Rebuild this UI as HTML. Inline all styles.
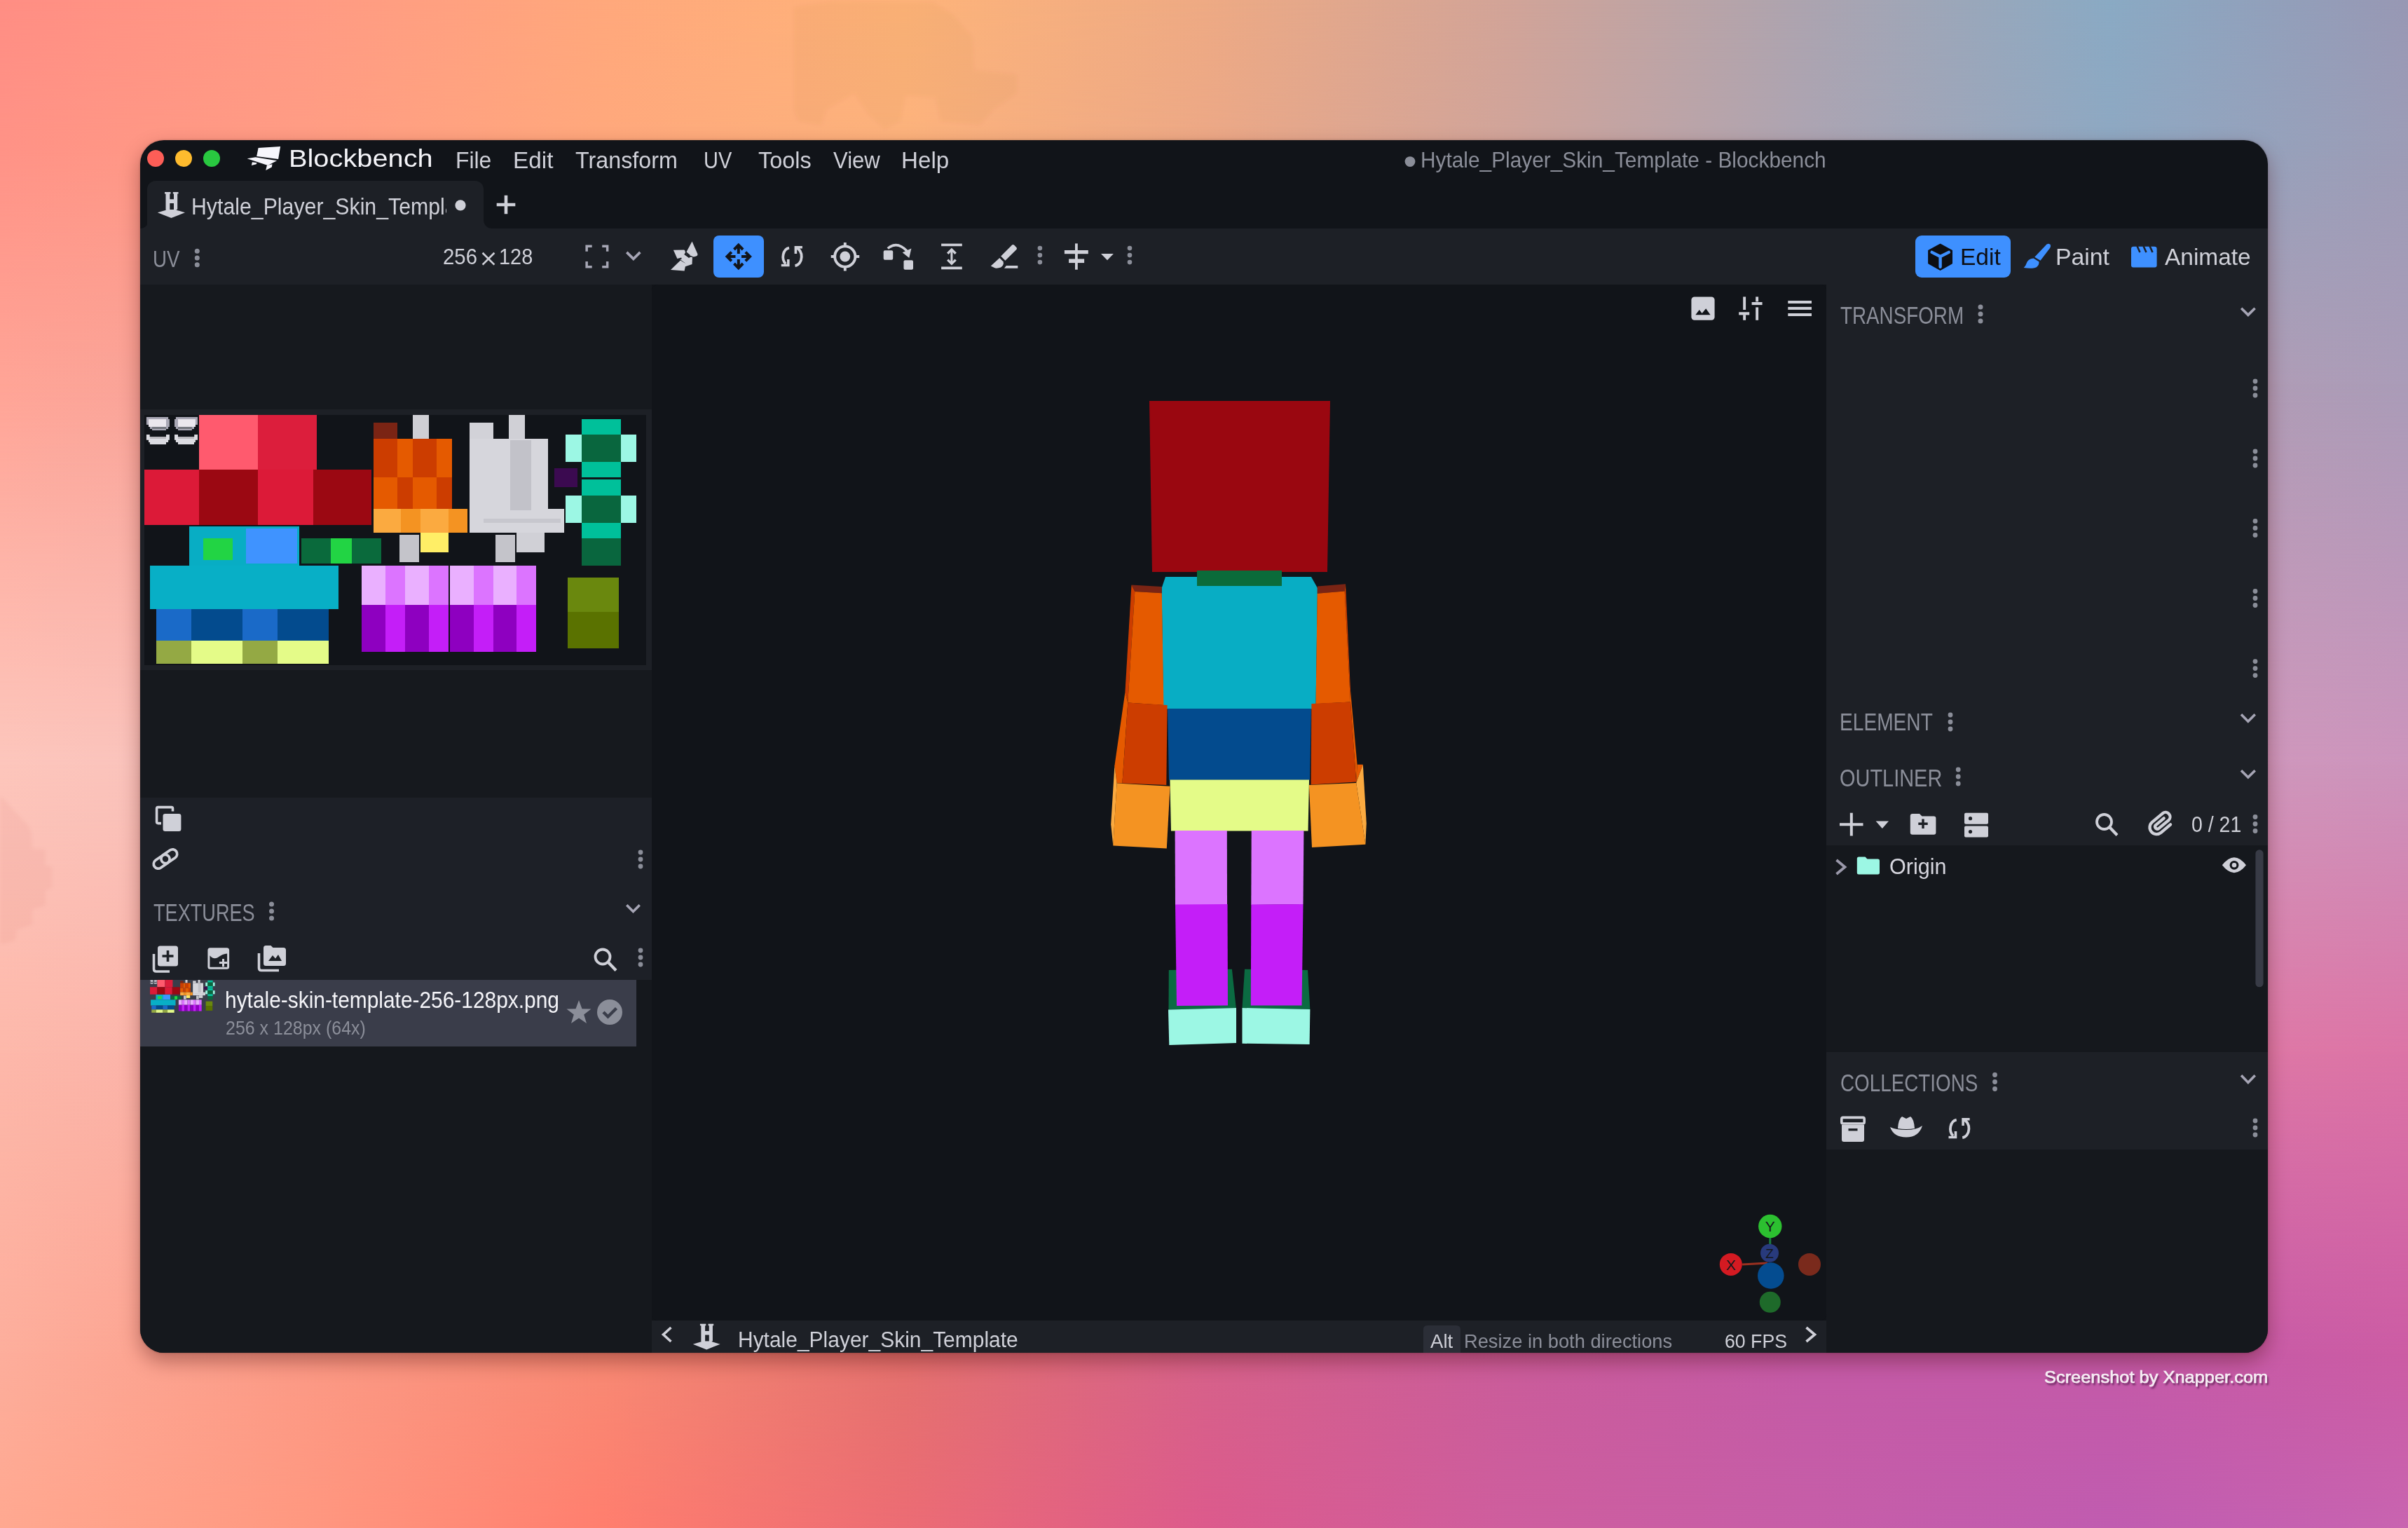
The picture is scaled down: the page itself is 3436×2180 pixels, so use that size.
<!DOCTYPE html>
<html><head><meta charset="utf-8">
<style>
html,body{margin:0;padding:0;width:3436px;height:2180px;overflow:hidden}
body{position:relative;font-family:"Liberation Sans",sans-serif;background:#f0a080}
.t{position:absolute;white-space:nowrap;line-height:1;transform-origin:0 0;font-family:"Liberation Sans",sans-serif}
.a{position:absolute}
#bg0{position:absolute;left:0;top:0;width:3436px;height:2180px;
 background:linear-gradient(90deg,#ff8e84 0px,#ffa07c 700px,#fdb47a 1300px,#f5ae80 1750px,#caa8a2 2350px,#90abc8 2900px,#9c9cb8 3436px)}
#bg1{position:absolute;left:0;top:0;width:3436px;height:2180px;
 background:linear-gradient(90deg,#fdc6bc 0px,#f0a898 600px,#e89890 1700px,#d890b0 2600px,#d088b8 3436px);
 -webkit-mask-image:linear-gradient(180deg,transparent 0px,#000 1100px,transparent 2180px)}
#bg2{position:absolute;left:0;top:0;width:3436px;height:2180px;
 background:linear-gradient(90deg,#ffa590 0px,#ff7d6c 900px,#e8687e 1500px,#d85890 1850px,#c862a8 2500px,#bf5fb2 2850px,#c868b2 3436px);
 -webkit-mask-image:linear-gradient(180deg,transparent 1100px,#000 2180px)}
#win{position:absolute;left:200px;top:200px;width:3036px;height:1730px;border-radius:34px;overflow:hidden;background:#111419;
 box-shadow:0 12px 28px rgba(70,10,10,.38),0 0 3px rgba(0,0,0,.3)}
</style></head><body>
<div class='a' style='left:0;top:0;width:3436px;height:2180px;background:linear-gradient(90deg,#ff8e84 0px,#ff9a84 430px,#ffa87c 860px,#feb47a 1290px,#eeaa84 1720px,#d2a498 2150px,#aca4b0 2580px,#8aaac4 3010px,#9898b4 3436px);'></div>
<div class='a' style='left:0;top:0;width:3436px;height:2180px;background:linear-gradient(90deg,#ff9286 0px,#ff9c84 430px,#ffa87c 860px,#fcb27c 1290px,#eca886 1720px,#d0a49a 2150px,#aca4b2 2580px,#8ea8c2 3010px,#9c9cb6 3436px);-webkit-mask-image:linear-gradient(180deg,transparent 0px,#000 200px);'></div>
<div class='a' style='left:0;top:0;width:3436px;height:2180px;background:linear-gradient(90deg,#ffa496 0px,#f4a39a 430px,#eaa29f 860px,#dfa1a3 1290px,#d4a0a7 1720px,#ca9fab 2150px,#bf9eb0 2580px,#b59db4 3010px,#aa9cb8 3436px);-webkit-mask-image:linear-gradient(180deg,transparent 200px,#000 545px);'></div>
<div class='a' style='left:0;top:0;width:3436px;height:2180px;background:linear-gradient(90deg,#fdc6bc 0px,#f7c0bc 430px,#f1b9bc 860px,#ebb3bc 1290px,#e4adbc 1720px,#dea7bc 2150px,#d8a0bc 2580px,#d29abc 3010px,#cc94bc 3436px);-webkit-mask-image:linear-gradient(180deg,transparent 545px,#000 1090px);'></div>
<div class='a' style='left:0;top:0;width:3436px;height:2180px;background:linear-gradient(90deg,#fdb8aa 0px,#f9afa9 430px,#f5a7a9 860px,#f19ea8 1290px,#ec96a8 1720px,#e88da7 2150px,#e485a7 2580px,#e07ca6 3010px,#dc74a6 3436px);-webkit-mask-image:linear-gradient(180deg,transparent 1090px,#000 1500px);'></div>
<div class='a' style='left:0;top:0;width:3436px;height:2180px;background:linear-gradient(90deg,#fdae9c 0px,#fc9a86 430px,#f88a74 860px,#e4716e 1290px,#d6628a 1720px,#ca5c9a 2150px,#c45aa6 2580px,#c45aa8 3010px,#cc5ca4 3436px);-webkit-mask-image:linear-gradient(180deg,transparent 1500px,#000 1930px);'></div>
<div class='a' style='left:0;top:0;width:3436px;height:2180px;background:linear-gradient(90deg,#ffa890 0px,#ff9880 430px,#ff7e6e 860px,#ec6c74 1290px,#dc5a8c 1720px,#ce5e9e 2150px,#c65ea8 2580px,#c05cb0 3010px,#c864b0 3436px);-webkit-mask-image:linear-gradient(180deg,transparent 1930px,#000 2180px);'></div>
<svg class="a" style="left:0;top:0" width="3436" height="2180">
<defs><filter id="bl"><feGaussianBlur stdDeviation="2.5"/></filter></defs>
<polygon filter="url(#bl)" fill="rgba(150,60,30,0.045)" points="1132.6,10 1189,1.7 1332,3.3 1358.5,20 1388,53 1390,100 1451.5,106 1451.5,133 1418,156 1398,179 1342,173 1335,139.5 1292,136 1285,173 1262,184 1239,163 1219,133 1179,156 1172,179 1139,173 1132.6,156"/>
<polygon filter="url(#bl)" fill="rgba(150,40,40,0.04)" points="0,1136 6.8,1141 17,1153 40.9,1178 45,1188.5 46,1210.6 64.7,1212 64.7,1234.5 74,1236 74,1267.7 64.7,1270 64.7,1292 46,1297.4 46,1319.6 23.8,1326.4 22,1341.7 6.8,1346 0,1346"/>
</svg>
<div id="win">
 <!-- coordinates inside window: page - 200 -->
 <!-- tab -->
 <div class="a" style="left:10px;top:58px;width:480px;height:68px;background:#1d2026;border-radius:12px 12px 0 0"></div>
 <div class="a" style="left:490px;top:114px;width:12px;height:12px;background:radial-gradient(circle at 100% 0,#111419 11.5px,#1d2026 12.5px)"></div>
 <div class="a" style="left:0px;top:114px;width:10px;height:12px;background:radial-gradient(circle at 0 0,#111419 11.5px,#1d2026 12.5px)"></div>
 <!-- toolbar -->
 <div class="a" style="left:0;top:126px;width:3036px;height:80px;background:#1d2026"></div>
 <!-- left panel -->
 <div class="a" style="left:0;top:206px;width:730px;height:178px;background:#16191e"></div>
 <div class="a" style="left:0;top:384px;width:730px;height:372px;background:#1d2026"></div>
 <div class="a" style="left:6px;top:392px;width:716px;height:357px;background:#111419"></div>
 <div class="a" style="left:0;top:756px;width:730px;height:182px;background:#16191e"></div>
 <div class="a" style="left:0;top:938px;width:730px;height:260px;background:#1d2027"></div>
 <div class="a" style="left:0;top:1198px;width:730px;height:532px;background:#15181d"></div>
 <div class="a" style="left:0;top:1198px;width:708px;height:95px;background:#3a3d4a"></div>
 <!-- viewport -->
 <div class="a" style="left:730px;top:206px;width:1676px;height:1478px;background:#111419;border-radius:9px"></div>
 <!-- status bar -->
 <div class="a" style="left:730px;top:1684px;width:1676px;height:46px;background:#1d2026"></div>
 <!-- right panel -->
 <div class="a" style="left:2406px;top:206px;width:630px;height:1000px;background:#1d2026"></div>
 <div class="a" style="left:2406px;top:1006px;width:630px;height:295px;background:#15181d"></div>
 <div class="a" style="left:2406px;top:1301px;width:630px;height:139px;background:#1d2026"></div>
 <div class="a" style="left:2406px;top:1440px;width:630px;height:290px;background:#15181d"></div>
 <!--WIN-->
</div>
<svg class='a' style='left:0;top:0' width='3436' height='2180' viewBox='0 0 3436 2180'><rect x='284' y='592' width='84.0' height='78.0' fill='#ff5a6e' />
<rect x='368' y='592' width='84.0' height='78.0' fill='#dc1e3c' />
<rect x='206' y='670' width='78.0' height='79.0' fill='#dc1a38' />
<rect x='284' y='670' width='84.0' height='79.0' fill='#9b0812' />
<rect x='368' y='670' width='79.0' height='79.0' fill='#dc1a38' />
<rect x='447' y='670' width='83.0' height='79.0' fill='#9b0812' />
<polygon points='208.9,595.0 240.1,595.0 240.1,598.1 241.9,598.1 241.9,608.9 240.1,608.9 240.1,612.0 237.0,612.0 237.0,613.9 217.0,613.9 217.0,612.0 213.9,612.0 213.9,608.9 212.0,608.9 212.0,606.0 208.9,606.0' fill='#a9a7b5'/>
<polygon points='212.0,598.1 237.0,598.1 237.0,608.9 212.0,608.9' fill='#ebe7ee'/>
<polygon points='217.0,609.1 237.0,609.1 237.0,612.0 217.0,612.0' fill='#74767e'/>
<polygon points='208.9,620.1 213.7,620.1 213.7,623.0 237.0,623.0 237.0,620.1 241.9,620.1 241.9,627.8 240.1,627.8 240.1,631.1 237.0,631.1 237.0,634.0 213.9,634.0 213.9,631.1 212.0,631.1 212.0,627.8 208.9,627.8' fill='#dcdce2'/>
<polygon points='213.9,623.0 237.0,623.0 237.0,625.9 213.9,625.9' fill='#b8b6bc'/>
<polygon points='282.0,595.0 250.9,595.0 250.9,598.1 249.0,598.1 249.0,608.9 250.9,608.9 250.9,612.0 254.0,612.0 254.0,613.9 273.9,613.9 273.9,612.0 277.0,612.0 277.0,608.9 278.9,608.9 278.9,606.0 282.0,606.0' fill='#a9a7b5'/>
<polygon points='278.9,598.1 254.0,598.1 254.0,608.9 278.9,608.9' fill='#ebe7ee'/>
<polygon points='273.9,609.1 254.0,609.1 254.0,612.0 273.9,612.0' fill='#74767e'/>
<polygon points='282.0,620.1 277.2,620.1 277.2,623.0 254.0,623.0 254.0,620.1 249.0,620.1 249.0,627.8 250.9,627.8 250.9,631.1 254.0,631.1 254.0,634.0 277.0,634.0 277.0,631.1 278.9,631.1 278.9,627.8 282.0,627.8' fill='#dcdce2'/>
<polygon points='277.0,623.0 254.0,623.0 254.0,625.9 277.0,625.9' fill='#b8b6bc'/>
<rect x='270' y='751' width='157.0' height='56.0' fill='#08adc4' />
<rect x='290' y='768' width='42.0' height='31.0' fill='#22d444' />
<rect x='351' y='754' width='73.0' height='50.0' fill='#3f93ff' />
<rect x='430' y='768' width='114.0' height='36.0' fill='#0a6a3c' />
<rect x='472' y='768' width='30.0' height='36.0' fill='#22d444' />
<rect x='214' y='807' width='269.0' height='62.0' fill='#08afc6' />
<rect x='223' y='869' width='50.0' height='45.0' fill='#1a6ac8' />
<rect x='273' y='869' width='73.0' height='45.0' fill='#034b8e' />
<rect x='346' y='869' width='50.0' height='45.0' fill='#1a6ac8' />
<rect x='396' y='869' width='73.0' height='45.0' fill='#034b8e' />
<rect x='223' y='914' width='50.0' height='33.0' fill='#94a944' />
<rect x='273' y='914' width='73.0' height='33.0' fill='#e4fb88' />
<rect x='346' y='914' width='50.0' height='33.0' fill='#94a944' />
<rect x='396' y='914' width='73.0' height='33.0' fill='#e4fb88' />
<rect x='533' y='603' width='34.0' height='23.0' fill='#7a2414' />
<rect x='589' y='592' width='23.0' height='34.0' fill='#cfcfd4' />
<rect x='533' y='626' width='34.0' height='55.0' fill='#cc3d00' />
<rect x='533' y='681' width='34.0' height='45.0' fill='#e55a00' />
<rect x='567' y='626' width='22.0' height='55.0' fill='#e55a00' />
<rect x='567' y='681' width='22.0' height='45.0' fill='#cc3d00' />
<rect x='589' y='626' width='34.0' height='55.0' fill='#cc3d00' />
<rect x='589' y='681' width='34.0' height='45.0' fill='#e55a00' />
<rect x='623' y='626' width='22.0' height='55.0' fill='#e55a00' />
<rect x='623' y='681' width='22.0' height='45.0' fill='#cc3d00' />
<rect x='533' y='726' width='39.0' height='34.0' fill='#fbaa40' />
<rect x='572' y='726' width='28.0' height='34.0' fill='#f49322' />
<rect x='600' y='726' width='40.0' height='34.0' fill='#fbaa40' />
<rect x='640' y='726' width='27.0' height='34.0' fill='#f49322' />
<rect x='570' y='763' width='28.0' height='39.0' fill='#c4c4ca' />
<rect x='600' y='760' width='40.0' height='28.0' fill='#ffee66' />
<rect x='670' y='603' width='34.0' height='23.0' fill='#d2d2d8' />
<rect x='726' y='592' width='23.0' height='34.0' fill='#d0d0d6' />
<rect x='670' y='626' width='112.0' height='134.0' fill='#d6d6dc' />
<rect x='782' y='726' width='23.0' height='34.0' fill='#d6d6dc' />
<rect x='737' y='760' width='40.0' height='28.0' fill='#d0d0d6' />
<rect x='707' y='763' width='28.0' height='39.0' fill='#c4c4ca' />
<rect x='728' y='628' width='30' height='100' fill='#b4b4bc' opacity='.6'/>
<rect x='690' y='740' width='110' height='6' fill='#b8b8c0' opacity='.5'/>
<rect x='791' y='668' width='33.0' height='27.0' fill='#3b0a50' />
<rect x='830' y='598' width='56.0' height='22.0' fill='#00c09a' />
<rect x='807' y='620' width='23.0' height='39.0' fill='#9cf7e4' />
<rect x='886' y='620' width='22.0' height='39.0' fill='#9cf7e4' />
<rect x='830' y='620' width='56.0' height='39.0' fill='#09663e' />
<rect x='830' y='659' width='56.0' height='22.0' fill='#00c09a' />
<rect x='830' y='684' width='56.0' height='23.0' fill='#00c09a' />
<rect x='807' y='707' width='23.0' height='39.0' fill='#9cf7e4' />
<rect x='886' y='707' width='22.0' height='39.0' fill='#9cf7e4' />
<rect x='830' y='707' width='56.0' height='39.0' fill='#09663e' />
<rect x='830' y='746' width='56.0' height='22.0' fill='#00c09a' />
<rect x='830' y='768' width='56.0' height='39.0' fill='#09663e' />
<rect x='810' y='824' width='73.0' height='49.0' fill='#6a880e' />
<rect x='810' y='873' width='73.0' height='52.0' fill='#5a7200' />
<rect x='516' y='807' width='34.0' height='56.0' fill='#eab0ff' />
<rect x='516' y='863' width='34.0' height='67.0' fill='#8e00c0' />
<rect x='550' y='807' width='28.0' height='56.0' fill='#dc74ff' />
<rect x='550' y='863' width='28.0' height='67.0' fill='#c41ef8' />
<rect x='578' y='807' width='34.0' height='56.0' fill='#eab0ff' />
<rect x='578' y='863' width='34.0' height='67.0' fill='#8e00c0' />
<rect x='612' y='807' width='28.0' height='56.0' fill='#dc74ff' />
<rect x='612' y='863' width='28.0' height='67.0' fill='#c41ef8' />
<rect x='642' y='807' width='34.0' height='56.0' fill='#eab0ff' />
<rect x='642' y='863' width='34.0' height='67.0' fill='#8e00c0' />
<rect x='676' y='807' width='28.0' height='56.0' fill='#dc74ff' />
<rect x='676' y='863' width='28.0' height='67.0' fill='#c41ef8' />
<rect x='704' y='807' width='33.0' height='56.0' fill='#eab0ff' />
<rect x='704' y='863' width='33.0' height='67.0' fill='#8e00c0' />
<rect x='737' y='807' width='28.0' height='56.0' fill='#dc74ff' />
<rect x='737' y='863' width='28.0' height='67.0' fill='#c41ef8' /><g transform='translate(214,1398) scale(0.1318435754189944) translate(-206,-592)'><rect x='284' y='592' width='84.0' height='78.0' fill='#ff5a6e' />
<rect x='368' y='592' width='84.0' height='78.0' fill='#dc1e3c' />
<rect x='206' y='670' width='78.0' height='79.0' fill='#dc1a38' />
<rect x='284' y='670' width='84.0' height='79.0' fill='#9b0812' />
<rect x='368' y='670' width='79.0' height='79.0' fill='#dc1a38' />
<rect x='447' y='670' width='83.0' height='79.0' fill='#9b0812' />
<polygon points='208.9,595.0 240.1,595.0 240.1,598.1 241.9,598.1 241.9,608.9 240.1,608.9 240.1,612.0 237.0,612.0 237.0,613.9 217.0,613.9 217.0,612.0 213.9,612.0 213.9,608.9 212.0,608.9 212.0,606.0 208.9,606.0' fill='#a9a7b5'/>
<polygon points='212.0,598.1 237.0,598.1 237.0,608.9 212.0,608.9' fill='#ebe7ee'/>
<polygon points='217.0,609.1 237.0,609.1 237.0,612.0 217.0,612.0' fill='#74767e'/>
<polygon points='208.9,620.1 213.7,620.1 213.7,623.0 237.0,623.0 237.0,620.1 241.9,620.1 241.9,627.8 240.1,627.8 240.1,631.1 237.0,631.1 237.0,634.0 213.9,634.0 213.9,631.1 212.0,631.1 212.0,627.8 208.9,627.8' fill='#dcdce2'/>
<polygon points='213.9,623.0 237.0,623.0 237.0,625.9 213.9,625.9' fill='#b8b6bc'/>
<polygon points='282.0,595.0 250.9,595.0 250.9,598.1 249.0,598.1 249.0,608.9 250.9,608.9 250.9,612.0 254.0,612.0 254.0,613.9 273.9,613.9 273.9,612.0 277.0,612.0 277.0,608.9 278.9,608.9 278.9,606.0 282.0,606.0' fill='#a9a7b5'/>
<polygon points='278.9,598.1 254.0,598.1 254.0,608.9 278.9,608.9' fill='#ebe7ee'/>
<polygon points='273.9,609.1 254.0,609.1 254.0,612.0 273.9,612.0' fill='#74767e'/>
<polygon points='282.0,620.1 277.2,620.1 277.2,623.0 254.0,623.0 254.0,620.1 249.0,620.1 249.0,627.8 250.9,627.8 250.9,631.1 254.0,631.1 254.0,634.0 277.0,634.0 277.0,631.1 278.9,631.1 278.9,627.8 282.0,627.8' fill='#dcdce2'/>
<polygon points='277.0,623.0 254.0,623.0 254.0,625.9 277.0,625.9' fill='#b8b6bc'/>
<rect x='270' y='751' width='157.0' height='56.0' fill='#08adc4' />
<rect x='290' y='768' width='42.0' height='31.0' fill='#22d444' />
<rect x='351' y='754' width='73.0' height='50.0' fill='#3f93ff' />
<rect x='430' y='768' width='114.0' height='36.0' fill='#0a6a3c' />
<rect x='472' y='768' width='30.0' height='36.0' fill='#22d444' />
<rect x='214' y='807' width='269.0' height='62.0' fill='#08afc6' />
<rect x='223' y='869' width='50.0' height='45.0' fill='#1a6ac8' />
<rect x='273' y='869' width='73.0' height='45.0' fill='#034b8e' />
<rect x='346' y='869' width='50.0' height='45.0' fill='#1a6ac8' />
<rect x='396' y='869' width='73.0' height='45.0' fill='#034b8e' />
<rect x='223' y='914' width='50.0' height='33.0' fill='#94a944' />
<rect x='273' y='914' width='73.0' height='33.0' fill='#e4fb88' />
<rect x='346' y='914' width='50.0' height='33.0' fill='#94a944' />
<rect x='396' y='914' width='73.0' height='33.0' fill='#e4fb88' />
<rect x='533' y='603' width='34.0' height='23.0' fill='#7a2414' />
<rect x='589' y='592' width='23.0' height='34.0' fill='#cfcfd4' />
<rect x='533' y='626' width='34.0' height='55.0' fill='#cc3d00' />
<rect x='533' y='681' width='34.0' height='45.0' fill='#e55a00' />
<rect x='567' y='626' width='22.0' height='55.0' fill='#e55a00' />
<rect x='567' y='681' width='22.0' height='45.0' fill='#cc3d00' />
<rect x='589' y='626' width='34.0' height='55.0' fill='#cc3d00' />
<rect x='589' y='681' width='34.0' height='45.0' fill='#e55a00' />
<rect x='623' y='626' width='22.0' height='55.0' fill='#e55a00' />
<rect x='623' y='681' width='22.0' height='45.0' fill='#cc3d00' />
<rect x='533' y='726' width='39.0' height='34.0' fill='#fbaa40' />
<rect x='572' y='726' width='28.0' height='34.0' fill='#f49322' />
<rect x='600' y='726' width='40.0' height='34.0' fill='#fbaa40' />
<rect x='640' y='726' width='27.0' height='34.0' fill='#f49322' />
<rect x='570' y='763' width='28.0' height='39.0' fill='#c4c4ca' />
<rect x='600' y='760' width='40.0' height='28.0' fill='#ffee66' />
<rect x='670' y='603' width='34.0' height='23.0' fill='#d2d2d8' />
<rect x='726' y='592' width='23.0' height='34.0' fill='#d0d0d6' />
<rect x='670' y='626' width='112.0' height='134.0' fill='#d6d6dc' />
<rect x='782' y='726' width='23.0' height='34.0' fill='#d6d6dc' />
<rect x='737' y='760' width='40.0' height='28.0' fill='#d0d0d6' />
<rect x='707' y='763' width='28.0' height='39.0' fill='#c4c4ca' />
<rect x='728' y='628' width='30' height='100' fill='#b4b4bc' opacity='.6'/>
<rect x='690' y='740' width='110' height='6' fill='#b8b8c0' opacity='.5'/>
<rect x='791' y='668' width='33.0' height='27.0' fill='#3b0a50' />
<rect x='830' y='598' width='56.0' height='22.0' fill='#00c09a' />
<rect x='807' y='620' width='23.0' height='39.0' fill='#9cf7e4' />
<rect x='886' y='620' width='22.0' height='39.0' fill='#9cf7e4' />
<rect x='830' y='620' width='56.0' height='39.0' fill='#09663e' />
<rect x='830' y='659' width='56.0' height='22.0' fill='#00c09a' />
<rect x='830' y='684' width='56.0' height='23.0' fill='#00c09a' />
<rect x='807' y='707' width='23.0' height='39.0' fill='#9cf7e4' />
<rect x='886' y='707' width='22.0' height='39.0' fill='#9cf7e4' />
<rect x='830' y='707' width='56.0' height='39.0' fill='#09663e' />
<rect x='830' y='746' width='56.0' height='22.0' fill='#00c09a' />
<rect x='830' y='768' width='56.0' height='39.0' fill='#09663e' />
<rect x='810' y='824' width='73.0' height='49.0' fill='#6a880e' />
<rect x='810' y='873' width='73.0' height='52.0' fill='#5a7200' />
<rect x='516' y='807' width='34.0' height='56.0' fill='#eab0ff' />
<rect x='516' y='863' width='34.0' height='67.0' fill='#8e00c0' />
<rect x='550' y='807' width='28.0' height='56.0' fill='#dc74ff' />
<rect x='550' y='863' width='28.0' height='67.0' fill='#c41ef8' />
<rect x='578' y='807' width='34.0' height='56.0' fill='#eab0ff' />
<rect x='578' y='863' width='34.0' height='67.0' fill='#8e00c0' />
<rect x='612' y='807' width='28.0' height='56.0' fill='#dc74ff' />
<rect x='612' y='863' width='28.0' height='67.0' fill='#c41ef8' />
<rect x='642' y='807' width='34.0' height='56.0' fill='#eab0ff' />
<rect x='642' y='863' width='34.0' height='67.0' fill='#8e00c0' />
<rect x='676' y='807' width='28.0' height='56.0' fill='#dc74ff' />
<rect x='676' y='863' width='28.0' height='67.0' fill='#c41ef8' />
<rect x='704' y='807' width='33.0' height='56.0' fill='#eab0ff' />
<rect x='704' y='863' width='33.0' height='67.0' fill='#8e00c0' />
<rect x='737' y='807' width='28.0' height='56.0' fill='#dc74ff' />
<rect x='737' y='863' width='28.0' height='67.0' fill='#c41ef8' /></g><polygon points='1640.0,572.0 1898.0,572.0 1894.0,816.0 1644.0,816.0' fill='#9a0710' />
<rect x='1708' y='814' width='121.0' height='22.0' fill='#0b6b3a' />
<polygon points='1663.0,823.0 1708.0,823.0 1708.0,836.0 1829.0,836.0 1829.0,823.0 1871.0,823.0 1880.0,839.0 1877.5,1011.6 1660.0,1011.6 1657.6,839.0' fill='#08adc4' />
<polygon points='1666.0,1011.0 1871.0,1011.0 1869.0,1112.7 1668.0,1112.7' fill='#034b8e' />
<polygon points='1669.4,1112.5 1868.0,1112.5 1866.5,1185.6 1671.0,1185.6' fill='#e4fb88' />
<polygon points='1614.5,834.4 1657.8,837.0 1657.8,846.2 1619.3,844.1' fill='#7a2414' />
<polygon points='1614.5,834.4 1619.3,844.1 1609.3,1002.6 1605.4,987.7' fill='#cc3d00' />
<polygon points='1619.3,844.1 1657.8,846.2 1660.4,1006.0 1609.3,1002.6' fill='#e55a00' />
<polygon points='1605.4,987.7 1609.3,1002.6 1601.4,1117.4 1590.4,1092.5' fill='#e55a00' />
<polygon points='1609.3,1002.6 1665.6,1006.0 1664.3,1120.0 1601.4,1117.4' fill='#cc3d00' />
<polygon points='1590.4,1092.5 1598.3,1092.5 1601.4,1117.4 1593.6,1117.4' fill='#e55a00' />
<polygon points='1590.4,1092.5 1593.6,1117.4 1588.3,1206.4 1585.2,1176.3' fill='#fbaa40' />
<polygon points='1593.6,1117.4 1669.6,1121.8 1664.8,1210.4 1588.3,1206.4' fill='#f49322' />
<polygon points='1879.7,836.5 1920.0,833.2 1918.7,843.4 1879.7,846.7' fill='#7a2414' />
<polygon points='1920.0,833.2 1927.0,985.0 1927.0,1001.4 1918.7,843.4' fill='#cc3d00' />
<polygon points='1879.7,846.7 1918.7,843.4 1927.0,1001.4 1877.5,1004.2' fill='#e55a00' />
<polygon points='1927.0,985.0 1936.6,1090.8 1935.2,1115.5 1927.0,1001.4' fill='#e55a00' />
<polygon points='1871.4,1004.0 1927.0,1001.4 1935.2,1115.5 1870.6,1119.6' fill='#cc3d00' />
<polygon points='1936.6,1090.8 1944.8,1090.8 1935.2,1116.9' fill='#e55a00' />
<polygon points='1944.8,1090.8 1949.8,1174.6 1948.4,1204.8 1935.2,1116.9' fill='#fbaa40' />
<polygon points='1867.9,1120.0 1935.2,1116.9 1948.4,1204.8 1872.0,1209.0' fill='#f49322' />
<polygon points='1667.8,1384.0 1757.9,1382.7 1763.8,1438.0 1667.5,1440.5' fill='#0b6b42' />
<polygon points='1776.0,1382.7 1866.0,1384.0 1869.4,1440.0 1772.5,1438.0' fill='#0b6b42' />
<polygon points='1676.6,1185.0 1750.8,1185.0 1751.0,1291.0 1677.0,1291.0' fill='#dc74ff' />
<polygon points='1677.0,1290.5 1751.5,1290.0 1752.0,1434.6 1679.0,1435.0' fill='#c41ef8' />
<polygon points='1785.7,1185.0 1860.4,1185.0 1859.5,1290.0 1785.3,1291.0' fill='#dc74ff' />
<polygon points='1785.3,1290.5 1859.5,1290.0 1857.5,1434.6 1784.8,1434.6' fill='#c41ef8' />
<polygon points='1667.0,1440.5 1764.0,1438.0 1764.0,1488.0 1668.3,1491.0' fill='#9cf7e4' />
<polygon points='1772.5,1438.0 1869.4,1440.0 1868.6,1490.0 1772.5,1488.8' fill='#9cf7e4' /><line x1='2486' y1='1804' x2='2522' y2='1802' stroke='#9a3020' stroke-width='3'/>
<line x1='2525.8' y1='1764' x2='2525.8' y2='1777' stroke='#1a7a40' stroke-width='3'/>
<circle cx='2525.8' cy='1749.5' r='16.7' fill='#2cc030'/>
<circle cx='2525' cy='1787.7' r='13' fill='#283a7c'/>
<circle cx='2469.8' cy='1803.9' r='16' fill='#d41a22'/>
<circle cx='2526.8' cy='1820' r='18.8' fill='#044c90'/>
<circle cx='2582' cy='1803.9' r='16' fill='#7a2a1c'/>
<circle cx='2525.8' cy='1857.8' r='15' fill='#1e6a2a'/>
<text x='2525.8' y='1757' font-size='21' font-family='Liberation Sans' text-anchor='middle' fill='#14181c'>Y</text>
<text x='2525' y='1795' font-size='19' font-family='Liberation Sans' text-anchor='middle' fill='#14181c'>Z</text>
<text x='2469.8' y='1811.5' font-size='21' font-family='Liberation Sans' text-anchor='middle' fill='#14181c'>X</text><circle cx='222' cy='226' r='12' fill='#fd5e57'/><circle cx='262' cy='226' r='12' fill='#febb2e'/><circle cx='302' cy='226' r='12' fill='#29c840'/>
<g fill='#f6f6fc'><polygon points='368.6,211 400.1,209 397.1,227.1 366.2,222.9'/><polygon points='352.6,226.2 364.6,224.3 395.1,229.2 382.2,235.9'/><polygon points='359.9,231.2 366.6,232.2 365.6,234.2 358.9,235.9'/><polygon points='380.9,235.9 388.5,234.2 387.8,238.5 379.2,242.9'/></g>
<circle cx='2012' cy='230.6' r='7.4' fill='#8b8e99'/>
<g transform='translate(225,274) scale(1.0) translate(-225,-274)' fill='#cfd0d8'>
<path d='M224.8,303.3 L244.4,297.5 L264,303.3 L244.4,311.1 Z'/>
<path d='M235,274 H243.5 V276.5 H242.3 V284.3 H248 V276.5 H246.8 V274 H254.5 V276.5 H253.2 V298.5 L244.4,304.5 L236.5,299.5 V276.5 H235 Z'/>
<rect x='242.3' y='290' width='5.7' height='9' fill='#1d2026'/>
</g>
<circle cx='657' cy='292.8' r='7.6' fill='#cfd0d8'/>
<path d='M708.7 292 H735.3 M722 278.7 V305.2' stroke='#cfd0d8' stroke-width='4.6'/>
<circle cx='281.3' cy='358.2' r='3.5' fill='#8b8e99'/><circle cx='281.3' cy='368.0' r='3.5' fill='#8b8e99'/><circle cx='281.3' cy='377.8' r='3.5' fill='#8b8e99'/>
<path d='M688.6,360.8 L705.4,377.6 M705.4,360.8 L688.6,377.6' stroke='#cfd0d8' stroke-width='2.7'/>
<path d='M837.15,358.7 V351.15 H844.7 M859.2,351.15 H866.65 V358.7 M866.65,373 V380.75 H859.2 M844.7,380.75 H837.15 V373' fill='none' stroke='#a6a6b4' stroke-width='3.5'/>
<polyline points='894.27,359.87 903.85,369.35 913.43,359.87' fill='none' stroke='#a6a5b5' stroke-width='3.6' stroke-linecap='butt' stroke-linejoin='miter'/>
<g fill='#cfd0d8'>
<path d='M987.5,344.6 L995.5,362.5 Q995.6,364.8 993.5,365.6 L989.7,366.6 L979.8,362.5 Q978.5,361.6 979.2,360 Z'/>
<path d='M960.9,356.8 L976.2,356.4 Q977.9,357 977.9,360.3 L973.5,368.1 L966.6,369.4 Z'/>
<path d='M957,385.1 L970.9,371.6 L977.5,375.5 L984.4,366.8 L988,366.8 L987.5,376.9 L977.9,380.3 L976.6,386.5 Z'/>
<path d='M969,369 L975.5,362.5 L985,369.5 L978.5,376 Z'/>
</g>
<path d='M965,370.5 L972.5,368.5 M978.5,360 L984,364.5' stroke='#1d2026' stroke-width='2.2'/>
<rect x='1018' y='336' width='72' height='60' rx='8' fill='#3e90ff'/>
<g stroke='#12151a' stroke-width='4' fill='none' stroke-linecap='butt'>
<path d='M1053.8 351 V362 M1053.8 370 V381 M1038 366 H1049.5 M1058 366 H1069.5'/>
<polyline points='1047.5,356 1053.8,349.7 1060.1,356'/>
<polyline points='1047.5,376 1053.8,382.3 1060.1,376'/>
<polyline points='1043.8,359.7 1037.5,366 1043.8,372.3'/>
<polyline points='1063.8,359.7 1070.1,366 1063.8,372.3'/>
</g>
<g transform='translate(0,0)'><g fill='none' stroke='#cfd0d8' stroke-width='3.8'>
<path d='M1126,353.6 A10.5,13 0 0 0 1121.2,376.5'/>
<path d='M1135.5,353.2 A10.5,13.2 0 0 1 1134.5,379.2'/>
</g>
<g fill='#cfd0d8'><path d='M1114.8,380.3 L1126.6,380.3 L1126.6,369.9 L1123,369.9 L1123,376.7 L1114.8,376.7 Z'/>
<path d='M1144.9,351 L1133.6,351 L1133.6,362 L1137.2,362 L1137.2,354.6 L1144.9,354.6 Z'/></g></g>
<g stroke='#cfd0d8' stroke-width='3.9' fill='none'><circle cx='1205.8' cy='366' r='14.6'/>
<path d='M1205.8,345.9 V351.4 M1205.8,380.6 V386.5 M1185.7,366 H1191.2 M1220.4,366 H1226.2'/></g>
<circle cx='1205.8' cy='366' r='7.4' fill='#cfd0d8'/>
<g fill='#cfd0d8'><rect x='1260.7' y='357.2' width='13.5' height='13.6' rx='2'/><rect x='1289.5' y='371.2' width='13.5' height='13.5' rx='2'/>
<path d='M1297.3,368.1 L1287.7,360.3 L1300.4,354.6 Z'/></g>
<path d='M1266.8,354.5 Q1280,343 1294.5,358.5' fill='none' stroke='#cfd0d8' stroke-width='3.6'/>
<g fill='#cfd0d8'><rect x='1343.1' y='347.6' width='29.7' height='3.6'/><rect x='1343.1' y='380.5' width='29.7' height='3.8'/>
<rect x='1356.4' y='356' width='3' height='20'/>
<path d='M1351,360.5 L1357.9,353.7 L1364.9,360.5 L1362.5,362.9 L1357.9,358.3 L1353.4,362.9 Z'/>
<path d='M1351,371.8 L1357.9,378.6 L1364.9,371.8 L1362.5,369.4 L1357.9,374 L1353.4,369.4 Z'/></g>
<g fill='#cfd0d8'><path d='M1444.4,349.3 Q1446,348.5 1447.5,350 L1450.6,353.3 Q1451.5,355 1450.4,356 L1434.4,371.8 L1428.2,365.6 Z'/>
<path d='M1426.3,368 L1431.5,373.2 Q1433,378 1428,381.5 Q1424,383 1420,382.5 L1413.8,379.4 Z'/>
<path d='M1433,382.8 L1435.8,378.9 H1452.3 V382.8 Z'/></g>
<circle cx='1483.9' cy='354.1' r='3.3' fill='#8b8e99'/><circle cx='1483.9' cy='364.1' r='3.3' fill='#8b8e99'/><circle cx='1483.9' cy='374.1' r='3.3' fill='#8b8e99'/>
<g fill='#cfd0d8'><rect x='1534' y='347.4' width='3.8' height='37.3'/><rect x='1518.9' y='357' width='33.9' height='5.2'/><rect x='1525.1' y='369.4' width='22' height='5.7'/></g>
<polygon points='1571,362 1588.9,362 1580,371.3' fill='#cfd0d8'/>
<circle cx='1612' cy='354.1' r='3.3' fill='#8b8e99'/><circle cx='1612' cy='364.1' r='3.3' fill='#8b8e99'/><circle cx='1612' cy='374.1' r='3.3' fill='#8b8e99'/>
<rect x='2733' y='336' width='136' height='60' rx='9' fill='#3e90ff'/>
<path d='M2768.6,348.7 L2785,357.7 V375.6 L2768.6,385 L2752.1,375.6 V357.7 Z' fill='#0d0f14' stroke='#0d0f14' stroke-width='2' stroke-linejoin='round'/>
<path d='M2756.6,359.9 L2768.6,366 L2780.8,359.9 M2768.6,366 V380.8' stroke='#3e90ff' stroke-width='4.4' fill='none' stroke-linecap='round'/>
<g fill='#3e90ff'><path d='M2920.5,348.6 Q2924,346.5 2925.7,349.2 Q2926.6,351.5 2925,354 L2911.5,371.8 L2903.2,366.8 Z'/><path d='M2901.6,368.6 L2909.6,373.4 Q2909.5,380.5 2903,382.3 Q2896,383.5 2887.7,382 Q2890.5,379.5 2891.5,376 Q2893.5,369.5 2901.6,368.6 Z'/></g>
<g fill='#3e90ff'><rect x='3041' y='359' width='36.6' height='22.6' rx='3'/><path d='M3041,361 V355 Q3041,351.7 3044.5,351.7 H3074 Q3077.6,351.7 3077.6,355 V361 Z'/></g>
<g stroke='#1d2026' stroke-width='2.6'><path d='M3049.5,351 L3053.5,360 M3058.5,351 L3062.5,360 M3067.5,351 L3071.5,360'/></g>
<rect x='2413.4' y='423.4' width='33.2' height='33.4' rx='4.5' fill='#cfd0d8'/>
<polygon points='2419.3,449.3 2424.8,442 2428.6,447 2434.2,440.2 2440.6,449.3' fill='#111419'/>
<g fill='#cfd0d8'><rect x='2487.2' y='423.4' width='3.9' height='18.6'/><rect x='2487.2' y='449.2' width='3.9' height='7.6'/><rect x='2481.2' y='445.3' width='15' height='4.1'/>
<rect x='2505.2' y='423.4' width='3.9' height='7'/><rect x='2505.2' y='438.4' width='3.9' height='18.4'/><rect x='2499.6' y='431' width='15' height='4.1'/></g>
<g fill='#cfd0d8'><rect x='2551.3' y='429' width='33.7' height='4'/><rect x='2551.3' y='437.9' width='33.7' height='4'/><rect x='2551.3' y='447' width='33.7' height='4'/></g>
<circle cx='2826' cy='438.1' r='3.5' fill='#8b8e99'/><circle cx='2826' cy='448.0' r='3.5' fill='#8b8e99'/><circle cx='2826' cy='457.9' r='3.5' fill='#8b8e99'/>
<polyline points='3198.17,439.77 3207.90,449.35 3217.63,439.77' fill='none' stroke='#a6a5b5' stroke-width='3.6' stroke-linecap='butt' stroke-linejoin='miter'/>
<circle cx='3218' cy='544' r='3.4' fill='#8b8e99'/><circle cx='3218' cy='554' r='3.4' fill='#8b8e99'/><circle cx='3218' cy='564' r='3.4' fill='#8b8e99'/>
<circle cx='3218' cy='644' r='3.4' fill='#8b8e99'/><circle cx='3218' cy='654' r='3.4' fill='#8b8e99'/><circle cx='3218' cy='664' r='3.4' fill='#8b8e99'/>
<circle cx='3218' cy='743.4' r='3.4' fill='#8b8e99'/><circle cx='3218' cy='753.4' r='3.4' fill='#8b8e99'/><circle cx='3218' cy='763.4' r='3.4' fill='#8b8e99'/>
<circle cx='3218' cy='843.5' r='3.4' fill='#8b8e99'/><circle cx='3218' cy='853.5' r='3.4' fill='#8b8e99'/><circle cx='3218' cy='863.5' r='3.4' fill='#8b8e99'/>
<circle cx='3218' cy='943.6' r='3.4' fill='#8b8e99'/><circle cx='3218' cy='953.6' r='3.4' fill='#8b8e99'/><circle cx='3218' cy='963.6' r='3.4' fill='#8b8e99'/>
<circle cx='2783' cy='1020' r='3.4' fill='#8b8e99'/><circle cx='2783' cy='1030' r='3.4' fill='#8b8e99'/><circle cx='2783' cy='1040' r='3.4' fill='#8b8e99'/>
<polyline points='3197.97,1019.27 3207.85,1029.15 3217.73,1019.27' fill='none' stroke='#a6a5b5' stroke-width='3.6' stroke-linecap='butt' stroke-linejoin='miter'/>
<circle cx='2794.2' cy='1098' r='3.4' fill='#8b8e99'/><circle cx='2794.2' cy='1108' r='3.4' fill='#8b8e99'/><circle cx='2794.2' cy='1118' r='3.4' fill='#8b8e99'/>
<polyline points='3197.97,1099.27 3207.85,1109.05 3217.73,1099.27' fill='none' stroke='#a6a5b5' stroke-width='3.6' stroke-linecap='butt' stroke-linejoin='miter'/>
<path d='M2625,1176.2 H2658.5 M2641.8,1159.7 V1192.6' stroke='#cfd0d8' stroke-width='4'/>
<polygon points='2676.6,1171.5 2695,1171.5 2685.8,1182' fill='#cfd0d8'/>
<path d='M2725.8,1164 Q2725.8,1161 2729,1161 H2739 L2742.5,1164.5 H2759.4 Q2762.4,1164.5 2762.4,1167.5 V1187.7 Q2762.4,1190.7 2759.4,1190.7 H2729 Q2725.8,1190.7 2725.8,1187.7 Z' fill='#cfd0d8'/>
<path d='M2744,1168.5 V1182 M2737.3,1175.2 H2750.7' stroke='#1d2026' stroke-width='3.4'/>
<rect x='2803' y='1159.7' width='34' height='16' rx='2' fill='#cfd0d8'/><rect x='2803' y='1178.6' width='34' height='16' rx='2' fill='#cfd0d8'/>
<circle cx='2811.5' cy='1167.7' r='2.6' fill='#1d2026'/><circle cx='2811.5' cy='1186.6' r='2.6' fill='#1d2026'/>
<circle cx='3002.5' cy='1172.5' r='10.5' fill='none' stroke='#cfd0d8' stroke-width='3.8'/><path d='M3010,1180 L3021,1191.5' stroke='#cfd0d8' stroke-width='4.2'/>
<path d='M3097.1,1176.4 L3083.6,1187.8 A9.75,9.75 0 0 1 3071.0,1172.8 L3086.0,1160.3 A6.5,6.5 0 0 1 3094.3,1170.3 L3080.2,1182.1 A3.25,3.25 0 0 1 3076.0,1177.2 L3087.7,1167.3' fill='none' stroke='#cfd0d8' stroke-width='4.3' stroke-linecap='round'/>
<circle cx='3218' cy='1165.5' r='3.4' fill='#8b8e99'/><circle cx='3218' cy='1175.5' r='3.4' fill='#8b8e99'/><circle cx='3218' cy='1185.5' r='3.4' fill='#8b8e99'/>
<polyline points='2620.5,1227 2632.5,1237 2620.5,1247' fill='none' stroke='#9a98aa' stroke-width='3.8'/>
<path d='M2649.8,1225 Q2649.8,1222.5 2652.3,1222.5 H2661.5 L2664.5,1225.5 H2679.5 Q2682,1225.5 2682,1228 V1245 Q2682,1247.5 2679.5,1247.5 H2652.3 Q2649.8,1247.5 2649.8,1245 Z' fill='#9cf7e4'/>
<path d='M3170.8,1234.3 Q3188,1212 3205,1234.3 Q3188,1256 3170.8,1234.3 Z' fill='#cfd0d8'/><circle cx='3188' cy='1234.3' r='6.4' fill='#13161b'/><circle cx='3188' cy='1234.3' r='3.3' fill='#cfd0d8'/>
<rect x='3218.4' y='1212.3' width='11.2' height='196' rx='5.6' fill='#383b46'/>
<circle cx='2846.5' cy='1533.5' r='3.4' fill='#8b8e99'/><circle cx='2846.5' cy='1543.5' r='3.4' fill='#8b8e99'/><circle cx='2846.5' cy='1553.5' r='3.4' fill='#8b8e99'/>
<polyline points='3198.07,1534.27 3207.90,1544.45 3217.73,1534.27' fill='none' stroke='#a6a5b5' stroke-width='3.6' stroke-linecap='butt' stroke-linejoin='miter'/>
<rect x='2627.8' y='1594.4' width='32.4' height='8.6' rx='2' fill='none' stroke='#cfd0d8' stroke-width='3.6'/><path d='M2628,1605 H2660 V1626 Q2660,1629 2657,1629 H2631 Q2628,1629 2628,1626 Z' fill='#cfd0d8'/><rect x='2637.5' y='1610' width='13' height='3.4' fill='#1d2026'/>
<path d='M2697,1608 Q2705,1612 2720,1612 Q2735,1612 2743,1606 Q2738,1622.5 2720,1622.5 Q2702,1622.5 2697,1608 Z' fill='#cfd0d8'/><path d='M2708,1610 Q2709,1596 2714,1593 L2720,1596 L2726,1593 Q2731,1596 2732,1610 Q2720,1612 2708,1610 Z' fill='#cfd0d8'/>
<g transform='translate(1665.7,1244)'><g fill='none' stroke='#cfd0d8' stroke-width='3.8'>
<path d='M1126,353.6 A10.5,13 0 0 0 1121.2,376.5'/>
<path d='M1135.5,353.2 A10.5,13.2 0 0 1 1134.5,379.2'/>
</g>
<g fill='#cfd0d8'><path d='M1114.8,380.3 L1126.6,380.3 L1126.6,369.9 L1123,369.9 L1123,376.7 L1114.8,376.7 Z'/>
<path d='M1144.9,351 L1133.6,351 L1133.6,362 L1137.2,362 L1137.2,354.6 L1144.9,354.6 Z'/></g></g>
<circle cx='3218' cy='1599' r='3.4' fill='#8b8e99'/><circle cx='3218' cy='1609' r='3.4' fill='#8b8e99'/><circle cx='3218' cy='1619' r='3.4' fill='#8b8e99'/>
<path d='M246.5,1157.5 V1153.5 Q246.5,1151.6 244.5,1151.6 H225.6 Q223.6,1151.6 223.6,1153.6 V1172.6 Q223.6,1174.6 225.6,1174.6 H230' fill='none' stroke='#cfd0d8' stroke-width='3.6'/><rect x='232.5' y='1160.9' width='25.9' height='25' rx='3.2' fill='#cfd0d8'/>
<g fill='none' stroke='#cfd0d8' stroke-width='3.7' transform='rotate(-35 236 1225.5)'><rect x='217' y='1219' width='25' height='13' rx='6.5'/><rect x='230' y='1219' width='25' height='13' rx='6.5'/></g>
<circle cx='914' cy='1216' r='3.4' fill='#8b8e99'/><circle cx='914' cy='1226' r='3.4' fill='#8b8e99'/><circle cx='914' cy='1236' r='3.4' fill='#8b8e99'/>
<circle cx='387.5' cy='1290' r='3.5' fill='#8b8e99'/><circle cx='387.5' cy='1300' r='3.5' fill='#8b8e99'/><circle cx='387.5' cy='1310' r='3.5' fill='#8b8e99'/>
<polyline points='894.27,1291.27 903.50,1300.45 912.73,1291.27' fill='none' stroke='#a6a5b5' stroke-width='3.6' stroke-linecap='butt' stroke-linejoin='miter'/>
<path d='M219.5,1361 V1382.5 Q219.5,1386 223,1386 H242' fill='none' stroke='#cfd0d8' stroke-width='3.6'/><rect x='225' y='1349.5' width='29' height='29' rx='3.5' fill='#cfd0d8'/><path d='M239.5,1356 V1372 M231.5,1364 H247.5' stroke='#1d2026' stroke-width='3.6'/>
<rect x='296.4' y='1352.2' width='30.7' height='30.6' rx='3.5' fill='#cfd0d8'/><path d='M299.4,1363.2 Q304,1369 310,1366.5 Q318,1360.5 324.1,1360.5 V1379.8 H299.4 Z' fill='#1d2026'/><path d='M318.5,1368 V1379.2 M312.9,1373.6 H324.1' stroke='#cfd0d8' stroke-width='3'/>
<path d='M369.5,1360 V1381 Q369.5,1384.5 373,1384.5 H398' fill='none' stroke='#cfd0d8' stroke-width='3.6'/><path d='M376,1352.5 Q376,1349 379.5,1349 H386.5 L389.5,1352 H404.5 Q408,1352 408,1355.5 V1374.5 Q408,1378 404.5,1378 H379.5 Q376,1378 376,1374.5 Z' fill='#cfd0d8'/><polygon points='383,1371 389,1363 393,1367.5 397,1362 402,1371' fill='#1d2026'/>
<circle cx='860' cy='1365' r='10.5' fill='none' stroke='#cfd0d8' stroke-width='3.8'/><path d='M867.5,1372.5 L879,1384.5' stroke='#cfd0d8' stroke-width='4.2'/>
<circle cx='914' cy='1356' r='3.4' fill='#8b8e99'/><circle cx='914' cy='1366' r='3.4' fill='#8b8e99'/><circle cx='914' cy='1376' r='3.4' fill='#8b8e99'/>
<polygon points='826,1427 830.5,1439.3 843.5,1439.5 833.2,1447.4 837,1460 826,1452.5 815,1460 818.8,1447.4 808.5,1439.5 821.5,1439.3' fill='#8b8e99'/>
<circle cx='870' cy='1444' r='18' fill='#8b8e99'/><polyline points='861,1444 867.5,1450.5 879.5,1438.5' fill='none' stroke='#3a3d4a' stroke-width='4.4'/>
<polyline points='957.5,1894 946.5,1904 957.5,1914' fill='none' stroke='#cfd0d8' stroke-width='3.6'/>
<g transform='translate(989,1888.7) scale(0.99) translate(-225,-274)' fill='#cfd0d8'>
<path d='M224.8,303.3 L244.4,297.5 L264,303.3 L244.4,311.1 Z'/>
<path d='M235,274 H243.5 V276.5 H242.3 V284.3 H248 V276.5 H246.8 V274 H254.5 V276.5 H253.2 V298.5 L244.4,304.5 L236.5,299.5 V276.5 H235 Z'/>
<rect x='242.3' y='290' width='5.7' height='9' fill='#1d2026'/>
</g>
<path d='M2031,1930 V1897 Q2031,1891 2037,1891 H2078 Q2084,1891 2084,1897 V1930 Z' fill='#2b2e37'/>
<polyline points='2577.5,1894 2589.5,1904 2577.5,1914' fill='none' stroke='#cfd0d8' stroke-width='3.6'/></svg>
<div class='t' style='left:411.6px;top:208.0px;font-size:35.94px;color:#f4f4f8;transform:scaleX(1.1074);'>Blockbench</div>
<div class='t' style='left:649.9px;top:212.0px;font-size:33.62px;color:#cfd0d8;transform:scaleX(0.9481);'>File</div>
<div class='t' style='left:732.3px;top:212.0px;font-size:33.62px;color:#cfd0d8;transform:scaleX(0.9920);'>Edit</div>
<div class='t' style='left:821.4px;top:212.0px;font-size:33.62px;color:#cfd0d8;transform:scaleX(0.9600);'>Transform</div>
<div class='t' style='left:1003.7px;top:212.0px;font-size:33.33px;color:#cfd0d8;transform:scaleX(0.8677);'>UV</div>
<div class='t' style='left:1082.2px;top:212.0px;font-size:33.33px;color:#cfd0d8;transform:scaleX(0.9737);'>Tools</div>
<div class='t' style='left:1188.7px;top:212.0px;font-size:33.33px;color:#cfd0d8;transform:scaleX(0.9322);'>View</div>
<div class='t' style='left:1286.3px;top:212.0px;font-size:33.33px;color:#cfd0d8;transform:scaleX(0.9948);'>Help</div>
<div class='t' style='left:2026.9px;top:213.0px;font-size:31.74px;color:#8b8e99;transform:scaleX(0.9400);'>Hytale_Player_Skin_Template - Blockbench</div>
<div style='position:absolute;left:270.7px;top:268.0px;width:366.3px;height:50.0px;overflow:hidden'><div class='t' style='left:2.6px;top:10px;font-size:33.33px;color:#cfd0d8;transform:scaleX(0.9084);'>Hytale_Player_Skin_Template</div></div>
<div class='t' style='left:217.8px;top:353.0px;font-size:33.33px;color:#8b8e99;transform:scaleX(0.8308);'>UV</div>
<div class='t' style='left:631.7px;top:351.0px;font-size:31.74px;color:#cfd0d8;transform:scaleX(0.9251);'>256</div>
<div class='t' style='left:712.3px;top:351.0px;font-size:31.74px;color:#cfd0d8;transform:scaleX(0.9125);'>128</div>
<div class='t' style='left:2797.3px;top:350.0px;font-size:33.77px;color:#0d0f14;transform:scaleX(0.9931);'>Edit</div>
<div class='t' style='left:2933.3px;top:350.0px;font-size:33.77px;color:#cfd0d8;transform:scaleX(1.0006);'>Paint</div>
<div class='t' style='left:3089.0px;top:350.0px;font-size:33.77px;color:#cfd0d8;transform:scaleX(0.9899);'>Animate</div>
<div class='t' style='left:2626.1px;top:433.0px;font-size:34.78px;color:#8b8e99;transform:scaleX(0.7997);'>TRANSFORM</div>
<div class='t' style='left:2625.3px;top:1013.0px;font-size:34.78px;color:#8b8e99;transform:scaleX(0.8090);'>ELEMENT</div>
<div class='t' style='left:2625.3px;top:1093.0px;font-size:34.78px;color:#8b8e99;transform:scaleX(0.8323);'>OUTLINER</div>
<div class='t' style='left:3126.9px;top:1161.0px;font-size:31.45px;color:#cfd0d8;transform:scaleX(0.9064);'>0 / 21</div>
<div class='t' style='left:2695.5px;top:1221.0px;font-size:31.88px;color:#d6d6de;transform:scaleX(0.9594);'>Origin</div>
<div class='t' style='left:2625.6px;top:1528.0px;font-size:34.78px;color:#8b8e99;transform:scaleX(0.8001);'>COLLECTIONS</div>
<div class='t' style='left:218.5px;top:1285.0px;font-size:34.78px;color:#8b8e99;transform:scaleX(0.7801);'>TEXTURES</div>
<div class='t' style='left:320.9px;top:1410.0px;font-size:33.33px;color:#f4f4f8;transform:scaleX(0.8970);'>hytale-skin-template-256-128px.png</div>
<div class='t' style='left:321.8px;top:1453.0px;font-size:27.10px;color:#8b8e99;transform:scaleX(0.9213);'>256 x 128px (64x)</div>
<div class='t' style='left:1053.4px;top:1896.0px;font-size:31.88px;color:#cfd0d8;transform:scaleX(0.9400);'>Hytale_Player_Skin_Template</div>
<div class='t' style='left:2041.0px;top:1899.0px;font-size:28.41px;color:#cfd0d8;transform:scaleX(0.9711);'>Alt</div>
<div class='t' style='left:2088.8px;top:1899.0px;font-size:28.41px;color:#8b8e99;transform:scaleX(0.9601);'>Resize in both directions</div>
<div class='t' style='left:2461.2px;top:1899.0px;font-size:28.41px;color:#cfd0d8;transform:scaleX(0.9399);'>60 FPS</div>
<div class='t' style='left:2916.7px;top:1953.0px;font-size:24.64px;color:#f6eef4;transform:scaleX(1.0318);-webkit-text-stroke:0.7px #f6eef4;text-shadow:2px 3px 2.5px rgba(50,10,50,.7);'>Screenshot by Xnapper.com</div>
</body></html>
